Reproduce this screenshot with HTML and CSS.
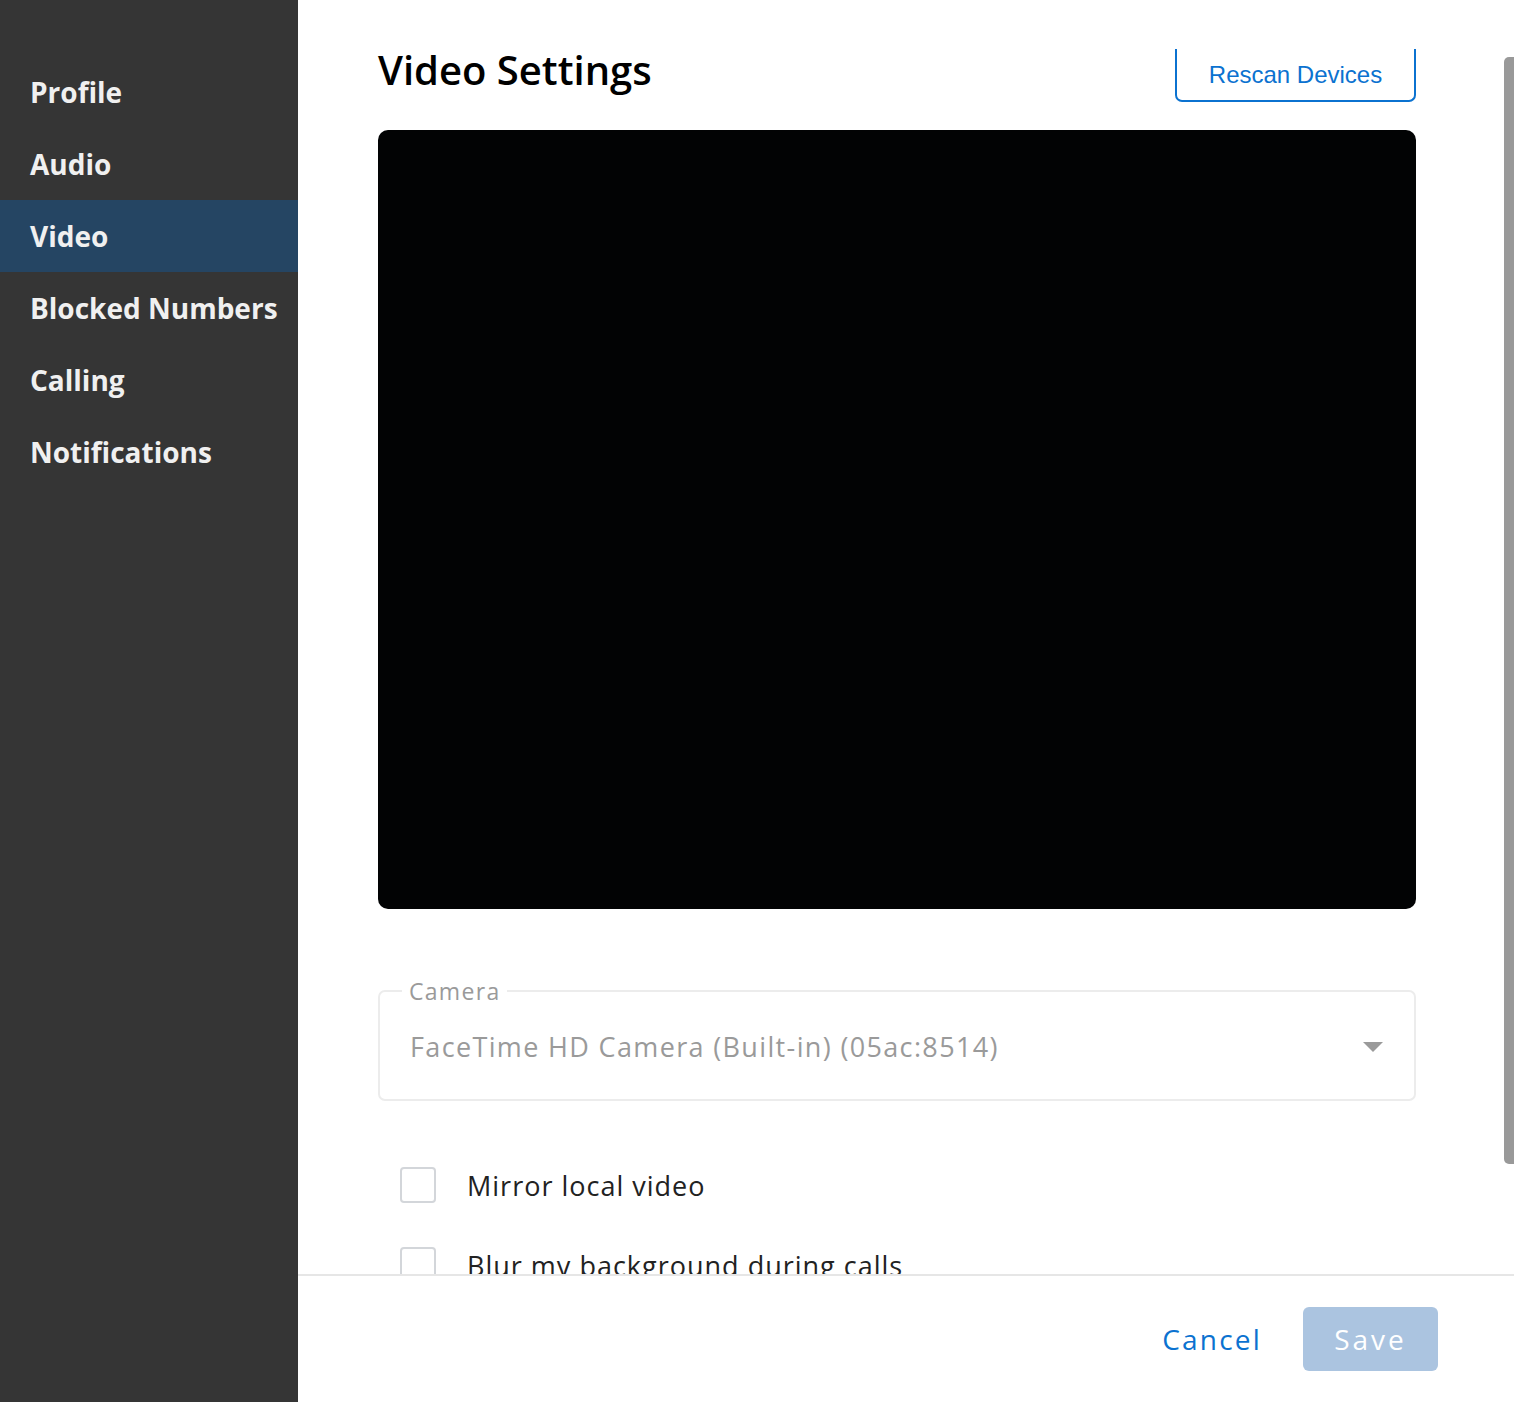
FILE: index.html
```html
<!DOCTYPE html>
<html lang="en">
<head>
    <meta charset="UTF-8">
    <meta name="viewport" content="width=device-width, initial-scale=1.0">
    <title>Video Settings</title>
    <link rel="stylesheet" href="styles.css">
</head>
<body>
    <nav class="sidebar">
        <div class="nav-item">Profile</div>
        <div class="nav-item">Audio</div>
        <div class="nav-item active">Video</div>
        <div class="nav-item">Blocked Numbers</div>
        <div class="nav-item">Calling</div>
        <div class="nav-item">Notifications</div>
    </nav>
    <div class="main">
        <div class="content">
            <div class="header">
                <h2>Video Settings</h2>
                <button class="rescan">Rescan Devices</button>
            </div>
            <div class="preview"></div>
            <fieldset class="select-field">
                <legend>Camera</legend>
                <div class="select-value">
                    <span>FaceTime HD Camera (Built-in) (05ac:8514)</span>
                    <span class="arrow"></span>
                </div>
            </fieldset>
            <label class="check-row first">
                <span class="checkbox"></span>
                <span>Mirror local video</span>
            </label>
            <label class="check-row">
                <span class="checkbox"></span>
                <span>Blur my background during calls</span>
            </label>
        </div>
        <div class="scrollbar"></div>
        <div class="footer">
            <button class="cancel">Cancel</button>
            <button class="save">Save</button>
        </div>
    </div>
</body>
</html>
```

FILE: styles.css
```css
body {
    margin: 0;
    height: 1402px;
    display: flex;
    overflow: hidden;
    font-family: "Open Sans", sans-serif;
    background-color: #ffffff;
}
.sidebar {
    width: 298px;
    flex-shrink: 0;
    background-color: #353535;
    padding-top: 56px;
    box-sizing: border-box;
}
.nav-item {
    height: 72px;
    display: flex;
    align-items: center;
    padding-left: 30px;
    color: #f0f0f0;
    font-size: 28px;
    font-weight: bold;
}
.nav-item.active {
    background-color: #254563;
}
.main {
    flex: 1;
    display: flex;
    flex-direction: column;
    position: relative;
    min-width: 0;
}
.content {
    flex: 1;
    overflow: hidden;
    padding: 0 98px 0 80px;
}
.header {
    display: flex;
    justify-content: space-between;
    align-items: flex-start;
    height: 130px;
}
h2 {
    margin: 42px 0 0;
    font-size: 40px;
    font-weight: 600;
    line-height: 56px;
    color: #000;
}
.rescan {
    margin-top: 49px;
    width: 241px;
    height: 53px;
    background: #fff;
    border: 2px solid #0b72d0;
    border-top: none;
    border-radius: 0 0 7px 7px;
    color: #0b72d0;
    font-family: "Liberation Sans", Arial, sans-serif;
    font-size: 24px;
    padding: 0;
}
.preview {
    height: 779px;
    background-color: #020304;
    border-radius: 10px;
}
.select-field {
    margin: 66px 0 0;
    padding: 0 30px;
    height: 126px;
    box-sizing: border-box;
    border: 2px solid #ececec;
    border-radius: 7px;
}
.select-field legend {
    padding: 0 7px;
    margin-left: -8px;
    color: #9a9a9a;
    font-size: 23px;
    letter-spacing: 1.3px;
}
.select-value {
    display: flex;
    justify-content: space-between;
    align-items: center;
    margin-top: 21px;
    color: #9a9a9a;
    font-size: 27px;
    letter-spacing: 1.35px;
}
.arrow {
    width: 0;
    height: 0;
    border-left: 10px solid transparent;
    border-right: 10px solid transparent;
    border-top: 10px solid #9a9a9a;
    margin-right: 1px;
}
.check-row {
    display: flex;
    align-items: center;
    gap: 31px;
    margin-left: 22px;
    height: 80px;
    color: #222;
    font-size: 27px;
    letter-spacing: 1px;
}
.check-row.first {
    margin-top: 44px;
}
.checkbox {
    width: 36px;
    height: 36px;
    flex-shrink: 0;
    box-sizing: border-box;
    border: 2px solid #d3d6da;
    border-radius: 4px;
}
.scrollbar {
    position: absolute;
    right: 0;
    top: 57px;
    width: 10px;
    height: 1107px;
    background-color: #999;
    border-radius: 5px 0 0 5px;
}
.footer {
    height: 128px;
    flex-shrink: 0;
    border-top: 2px solid #e6e6e6;
    display: flex;
    justify-content: flex-end;
    align-items: center;
    gap: 41px;
    padding-right: 76px;
    box-sizing: border-box;
}
.footer button {
    font-family: "Open Sans", sans-serif;
    font-size: 28px;
    letter-spacing: 3px;
    border: none;
    cursor: pointer;
}
.footer .cancel {
    background: none;
    color: #0b72d0;
    padding: 0;
    letter-spacing: 2.2px;
}
.save {
    width: 135px;
    height: 64px;
    background-color: #abc4e0;
    color: #fff;
    border-radius: 6px;
}
```
